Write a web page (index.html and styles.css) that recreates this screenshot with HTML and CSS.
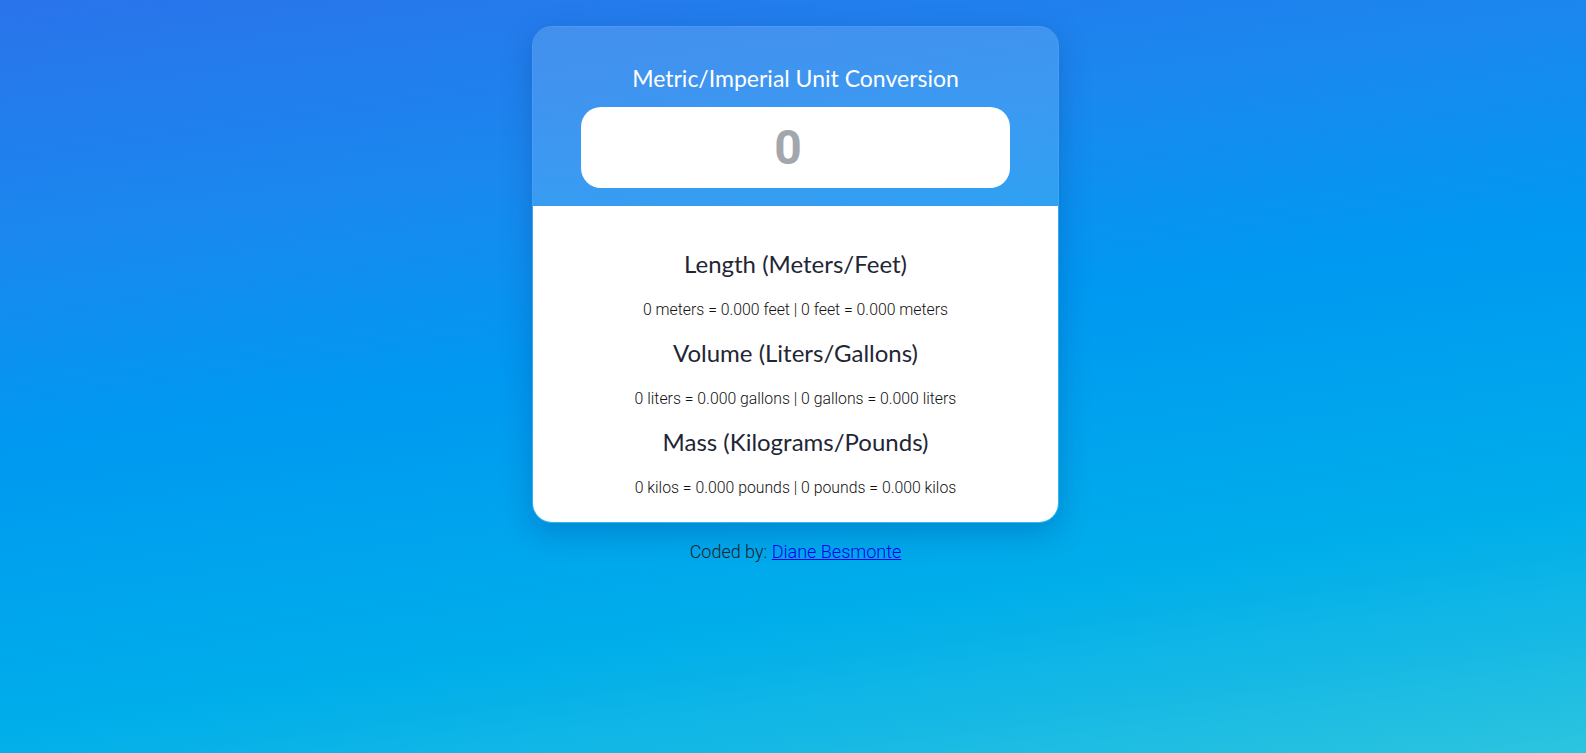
FILE: index.html
```html
<!DOCTYPE html>
<html lang="en">
<head>
<meta charset="utf-8">
<title>Metric/Imperial Unit Conversion</title>
<link rel="stylesheet" href="styles.css">
</head>
<body>
<div class="page">
  <div class="card">
    <div class="card-head">
      <h1 class="title">Metric/Imperial Unit Conversion</h1>
      <input class="value-input" type="number" placeholder="0">
    </div>
    <div class="card-body">
      <h2 class="unit-title">Length (Meters/Feet)</h2>
      <p class="unit-text">0 meters = 0.000 feet | 0 feet = 0.000 meters</p>
      <h2 class="unit-title">Volume (Liters/Gallons)</h2>
      <p class="unit-text">0 liters = 0.000 gallons | 0 gallons = 0.000 liters</p>
      <h2 class="unit-title">Mass (Kilograms/Pounds)</h2>
      <p class="unit-text">0 kilos = 0.000 pounds | 0 pounds = 0.000 kilos</p>
    </div>
  </div>
  <p class="footer">Coded by: <a href="#">Diane Besmonte</a></p>
</div>
</body>
</html>
```
FILE: styles.css
```css
html, body {
  margin: 0;
  padding: 0;
}
body {
  min-height: 100vh;
  background: linear-gradient(172deg, #2a73ea 0%, #1a88ef 25%, #0098f1 45%, #00aeea 75%, #2cc4df 100%);
  font-family: Roboto, "Liberation Sans", sans-serif;
  font-weight: 300;
  color: #1a1f2b;
}
.page {
  display: flex;
  flex-direction: column;
  align-items: center;
  padding: 26px 0 0 5px;
}
.card {
  width: 527px;
  box-sizing: border-box;
  border: 1px solid rgba(255, 255, 255, 0.2);
  border-radius: 20px;
  overflow: hidden;
  box-shadow: 0 10px 30px rgba(0, 40, 120, 0.25);
}
.card-head {
  background: rgba(255, 255, 255, 0.15);
  padding: 35px 48px 18px;
  display: flex;
  flex-direction: column;
  align-items: center;
}
.card-body {
  background: #fff;
  padding: 42px 20px 7px;
  text-align: center;
}
.title {
  margin: 0 0 13px;
  font-family: Lato, "Noto Sans", sans-serif;
  font-weight: 400;
  font-size: 23px;
  line-height: 32px;
  color: #fff;
}
.value-input {
  width: 100%;
  height: 81px;
  box-sizing: border-box;
  border: none;
  border-radius: 20px;
  background: #fff;
  text-align: center;
  font-family: Roboto, "Liberation Sans", sans-serif;
  font-weight: 700;
  font-size: 48px;
  color: #a3a6ab;
  outline: none;
  padding: 0 10px;
}
.value-input::placeholder {
  color: #a3a6ab;
  opacity: 1;
}
.unit-title {
  margin: 0 0 18px;
  font-family: Lato, "Noto Sans", sans-serif;
  font-weight: 400;
  font-size: 24px;
  line-height: 32px;
  color: #1f2636;
}
.unit-text {
  margin: 0 0 15px;
  font-size: 15.8px;
  line-height: 24px;
  color: #111;
}
.footer {
  margin: 17px 0 0;
  font-size: 18px;
  line-height: 24px;
  color: #1a1f2b;
}
.footer a {
  color: #0000ee;
}
```
